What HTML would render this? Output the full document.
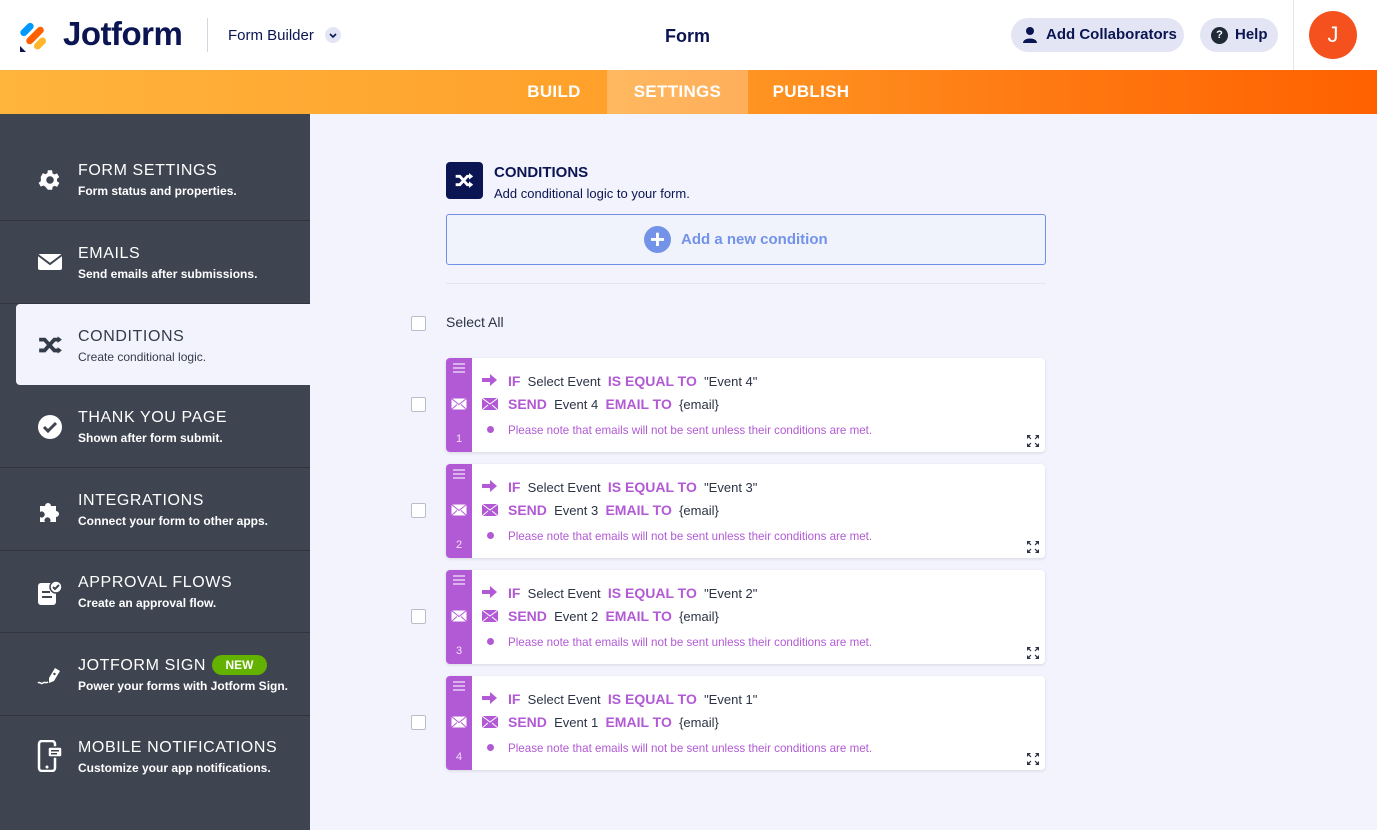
<!DOCTYPE html>
<html><head><meta charset="utf-8"><style>
*{box-sizing:border-box;margin:0;padding:0}
body{width:1377px;height:830px;overflow:hidden;background:#f3f3fe;font-family:"Liberation Sans",sans-serif;position:relative;color:#0a1551}
.abs{position:absolute}
.top{left:0;top:0;width:1377px;height:70px;background:#fff}
.band{left:0;top:70px;width:1377px;height:44px;background:linear-gradient(90deg,#ffb43c 0%,#ffa02a 45%,#ff7a12 75%,#ff6100 100%)}
.tab{top:70px;height:44px;line-height:44px;color:#fff;font-size:17px;font-weight:bold;text-align:center;letter-spacing:.3px}
.pill{top:18px;height:34px;border-radius:17px;background:#e3e5f5;font-weight:bold;font-size:15px;line-height:34px;color:#0a1551}
.side{left:0;top:114px;width:310px;height:716px;background:#3e4450}
.item{left:0;width:310px;height:83px;border-bottom:1px solid #2f343d;color:#fff}
.item .t{position:absolute;left:78px;top:24px;font-size:16px;letter-spacing:.6px}
.item .s{position:absolute;left:78px;top:46px;font-size:12px;font-weight:bold}
.item svg{position:absolute;left:37px;top:29px}
.act{left:16px;width:294px;background:#f3f3fe;color:#343c4a;border-radius:4px 0 0 4px;border:none}
.act .t{left:62px}.act .s{left:62px;font-weight:normal}
.act svg{left:21px}
.card{left:446px;width:599px;height:94px;background:#fff;border-radius:4px;box-shadow:0 1px 3px rgba(0,0,0,.12)}
.strip{position:absolute;left:0;top:0;width:26px;height:94px;background:#b25ad5;border-radius:4px 0 0 4px}
.ln{position:absolute;left:62px;font-size:13px;color:#2c3345;white-space:nowrap}
.k{color:#b25ad5;font-weight:bold;font-size:14px}
.note{position:absolute;left:62px;top:66px;font-size:11.6px;color:#b25ad5}
.cb{left:411px;width:15px;height:15px;border:1px solid #b8bdc9;border-radius:2px;background:#fff}
</style></head><body>
<div class="abs top"></div>
<svg class="abs" style="left:19px;top:19px" width="32" height="34" viewBox="0 0 32 34">
<rect x="0" y="7" width="16" height="7" rx="3.5" fill="#0099ff" transform="rotate(-45 8 10.5)"/>
<rect x="5" y="13" width="22" height="7" rx="3.5" fill="#ff6100" transform="rotate(-45 16 16.5)"/>
<rect x="14" y="21" width="14" height="7" rx="3.5" fill="#ffb629" transform="rotate(-45 21 24.5)"/>
<path d="M1 27 L7 33 L1 33Z" fill="#0a1551"/></svg>
<div class="abs" style="left:63px;top:15px;font-size:33px;font-weight:bold;color:#0a1551;letter-spacing:-.5px">Jotform</div>
<div class="abs" style="left:207px;top:18px;width:1px;height:34px;background:#d4d6e2"></div>
<div class="abs" style="left:228px;top:27px;font-size:15px;color:#0a1551">Form Builder</div>
<svg class="abs" style="left:325px;top:27px" width="16" height="16" viewBox="0 0 16 16"><circle cx="8" cy="8" r="8" fill="#e3e5f5"/><path d="M5 7l3 3 3-3" stroke="#0a1551" stroke-width="1.6" fill="none"/></svg>
<div class="abs" style="left:665px;top:26px;font-size:18px;font-weight:bold;color:#0a1551">Form</div>
<div class="abs pill" style="left:1011px;width:173px;padding-left:35px">Add Collaborators</div>
<svg class="abs" style="left:1022px;top:26px" width="16" height="18" viewBox="0 0 16 18"><circle cx="8" cy="5" r="4" fill="#0a1551"/><path d="M1 17 C1 11 15 11 15 17Z" fill="#0a1551"/></svg>
<div class="abs pill" style="left:1200px;width:78px;padding-left:35px">Help</div>
<div class="abs" style="left:1211px;top:27px;width:17px;height:17px;border-radius:9px;background:#1f2937;color:#fff;font-size:11px;font-weight:bold;text-align:center;line-height:17px">?</div>
<div class="abs" style="left:1293px;top:0;width:1px;height:70px;background:#e3e5ea"></div>
<div class="abs" style="left:1309px;top:11px;width:48px;height:48px;border-radius:24px;background:#f4511e;color:#fff;font-size:22px;text-align:center;line-height:48px">J</div>
<div class="abs band"></div>
<div class="abs tab" style="left:510px;width:88px">BUILD</div>
<div class="abs tab" style="left:607px;width:141px;background:rgba(255,255,255,.25)">SETTINGS</div>
<div class="abs tab" style="left:760px;width:102px">PUBLISH</div>
<div class="abs side"></div>
<div class="abs item" style="top:138px"><svg width="26" height="26" viewBox="0 0 24 24"><path fill="#fff" d="M19.4 13a7.5 7.5 0 000-2l2.1-1.6-2-3.5-2.5 1a7 7 0 00-1.7-1L15 3h-4l-.4 2.7a7 7 0 00-1.7 1l-2.5-1-2 3.5L4.6 11a7.5 7.5 0 000 2l-2.1 1.6 2 3.5 2.5-1a7 7 0 001.7 1L11 21h4l.4-2.7a7 7 0 001.7-1l2.5 1 2-3.5zM13 15.5a3.5 3.5 0 110-7 3.5 3.5 0 010 7z" transform="translate(-1 0)"/></svg><div class="t">FORM SETTINGS</div><div class="s">Form status and properties.</div></div>
<div class="abs item" style="top:221px"><svg width="26" height="22" viewBox="0 0 26 22" style="top:30px"><rect x="1" y="3" width="24" height="16" rx="2" fill="#fff"/><path d="M1 4 L13 13 L25 4" stroke="#3e4450" stroke-width="2" fill="none"/></svg><div class="t">EMAILS</div><div class="s">Send emails after submissions.</div></div>
<div class="abs item act" style="top:304px;height:81px"><svg width="26" height="22" viewBox="0 0 24 20" style="top:30px"><path d="M2 5h5l9 10h5M2 15h5l9-10h5" stroke="#343c4a" stroke-width="3.5" fill="none"/><path d="M19 2l4 3-4 3zM19 12l4 3-4 3z" fill="#343c4a"/></svg><div class="t">CONDITIONS</div><div class="s">Create conditional logic.</div></div>
<div class="abs item" style="top:385px"><svg width="26" height="26" viewBox="0 0 26 26"><circle cx="13" cy="13" r="12" fill="#fff"/><path d="M7 13l4 4 8-8" stroke="#3e4450" stroke-width="3" fill="none"/></svg><div class="t">THANK YOU PAGE</div><div class="s">Shown after form submit.</div></div>
<div class="abs item" style="top:468px"><svg width="26" height="26" viewBox="0 0 26 26"><path fill="#fff" d="M3 9h5a3 3 0 116 0h5v5a3 3 0 110 6v5h-6a3 3 0 10-5 0H3v-5a3 3 0 100-5z"/></svg><div class="t">INTEGRATIONS</div><div class="s">Connect your form to other apps.</div></div>
<div class="abs item" style="top:550px"><svg width="26" height="28" viewBox="0 0 26 28"><rect x="1" y="4" width="18" height="22" rx="3" fill="#fff"/><rect x="5" y="12" width="8" height="2" fill="#3e4450"/><rect x="5" y="17" width="10" height="2" fill="#3e4450"/><circle cx="19" cy="8" r="6" fill="#fff" stroke="#3e4450" stroke-width="1.5"/><path d="M16 8l2 2 4-4" stroke="#3e4450" stroke-width="2" fill="none"/></svg><div class="t">APPROVAL FLOWS</div><div class="s">Create an approval flow.</div></div>
<div class="abs item" style="top:633px"><svg width="26" height="26" viewBox="0 0 26 26"><path d="M12 16l6-10 5 3-6 10-5 2z" fill="#fff"/><circle cx="17.5" cy="12" r="1.2" fill="#3e4450"/><path d="M1 21c2-2 3 2 5 0s2 1 5-1" stroke="#fff" stroke-width="1.5" fill="none"/></svg><div class="t">JOTFORM SIGN</div><div class="s">Power your forms with Jotform Sign.</div><div style="position:absolute;left:212px;top:22px;width:55px;height:20px;border-radius:10px;background:#64b200;color:#fff;font-size:12px;font-weight:bold;text-align:center;line-height:20px">NEW</div></div>
<div class="abs item" style="top:715px;border:none"><svg width="26" height="32" viewBox="0 0 26 32" style="top:25px"><rect x="2" y="1" width="16" height="30" rx="3" fill="none" stroke="#fff" stroke-width="2.5"/><circle cx="10" cy="27" r="1.5" fill="#fff"/><rect x="11" y="7" width="14" height="10" rx="2" fill="#fff" stroke="#3e4450" stroke-width="1.5"/><rect x="14" y="10" width="8" height="1.5" fill="#3e4450"/><rect x="14" y="13" width="6" height="1.5" fill="#3e4450"/></svg><div class="t">MOBILE NOTIFICATIONS</div><div class="s">Customize your app notifications.</div></div>

<div class="abs" style="left:446px;top:162px;width:37px;height:37px;border-radius:4px;background:#0a1551"></div>
<svg class="abs" style="left:454px;top:172px" width="20" height="17" viewBox="0 0 24 20"><path d="M2 5h5l9 10h4M2 15h5l9-10h4" stroke="#fff" stroke-width="3.5" fill="none"/><path d="M18 1l5 4-5 4zM18 11l5 4-5 4z" fill="#fff"/></svg>
<div class="abs" style="left:494px;top:164px;font-size:15px;font-weight:bold;color:#0a1551">CONDITIONS</div>
<div class="abs" style="left:494px;top:186px;font-size:13px;color:#0a1551">Add conditional logic to your form.</div>
<div class="abs" style="left:446px;top:214px;width:600px;height:51px;border:1px solid #7090e8;border-radius:3px;background:#f0f2fc"></div>
<div class="abs" style="left:644px;top:226px;width:27px;height:27px;border-radius:14px;background:#7393e8;color:#fff;font-size:26px;font-weight:bold;text-align:center;line-height:27px">+</div>
<div class="abs" style="left:681px;top:231px;font-size:15px;font-weight:bold;color:#7393e8">Add a new condition</div>
<div class="abs" style="left:446px;top:283px;width:600px;height:1px;background:#e3e5ec"></div>
<div class="abs cb" style="top:316px"></div>
<div class="abs" style="left:446px;top:314px;font-size:14px;color:#2c3345">Select All</div>

<!-- cards -->
<div class="abs cb" style="top:397px"></div>
<div class="abs card" style="top:358px"><div class="strip"></div>
<svg style="position:absolute;left:7px;top:5px" width="12" height="10"><path d="M0 1h12M0 5h12M0 9h12" stroke="#e8d0f2" stroke-width="1.5"/></svg>
<svg style="position:absolute;left:5px;top:40px" width="16" height="12"><rect x=".5" y=".5" width="15" height="11" fill="#fff"/><path d="M.5 .5l7.5 6 7.5-6M.5 11.5l5.5-5M15.5 11.5l-5.5-5" stroke="#b25ad5" stroke-width="1" fill="none"/></svg>
<div style="position:absolute;left:10px;top:75px;color:#f3e0fb;font-size:11px">1</div>
<svg style="position:absolute;left:36px;top:16px" width="15" height="12"><path d="M0 4h8V0l7 6-7 6V8H0z" fill="#b25ad5"/></svg><div class="ln" style="top:15px"><span class="k">IF</span>&nbsp; Select Event &nbsp;<span class="k">IS EQUAL TO</span>&nbsp; "Event 4"</div>
<svg style="position:absolute;left:36px;top:40px" width="16" height="12"><rect width="16" height="12" fill="#b25ad5"/><path d="M0 0l8 6 8-6M0 12l6-5M16 12l-6-5" stroke="#fff" stroke-width="1" fill="none"/></svg><div class="ln" style="top:38px"><span class="k">SEND</span>&nbsp; Event 4 &nbsp;<span class="k">EMAIL TO</span>&nbsp; {email}</div>
<div style="position:absolute;left:41px;top:68px;width:7px;height:7px;border-radius:4px;background:#b25ad5"></div><div class="note">Please note that emails will not be sent unless their conditions are met.</div>
<svg style="position:absolute;left:581px;top:77px" width="12" height="12"><path d="M0 0h4L0 4zM12 0v4L8 0zM0 12V8l4 4zM12 12H8l4-4z" fill="#2c3345"/><path d="M1 1l3 3M11 1L8 4M1 11l3-3M11 11L8 8" stroke="#2c3345" stroke-width="1.2"/></svg></div>

<div class="abs cb" style="top:503px"></div>
<div class="abs card" style="top:464px"><div class="strip"></div>
<svg style="position:absolute;left:7px;top:5px" width="12" height="10"><path d="M0 1h12M0 5h12M0 9h12" stroke="#e8d0f2" stroke-width="1.5"/></svg>
<svg style="position:absolute;left:5px;top:40px" width="16" height="12"><rect x=".5" y=".5" width="15" height="11" fill="#fff"/><path d="M.5 .5l7.5 6 7.5-6M.5 11.5l5.5-5M15.5 11.5l-5.5-5" stroke="#b25ad5" stroke-width="1" fill="none"/></svg>
<div style="position:absolute;left:10px;top:75px;color:#f3e0fb;font-size:11px">2</div>
<svg style="position:absolute;left:36px;top:16px" width="15" height="12"><path d="M0 4h8V0l7 6-7 6V8H0z" fill="#b25ad5"/></svg><div class="ln" style="top:15px"><span class="k">IF</span>&nbsp; Select Event &nbsp;<span class="k">IS EQUAL TO</span>&nbsp; "Event 3"</div>
<svg style="position:absolute;left:36px;top:40px" width="16" height="12"><rect width="16" height="12" fill="#b25ad5"/><path d="M0 0l8 6 8-6M0 12l6-5M16 12l-6-5" stroke="#fff" stroke-width="1" fill="none"/></svg><div class="ln" style="top:38px"><span class="k">SEND</span>&nbsp; Event 3 &nbsp;<span class="k">EMAIL TO</span>&nbsp; {email}</div>
<div style="position:absolute;left:41px;top:68px;width:7px;height:7px;border-radius:4px;background:#b25ad5"></div><div class="note">Please note that emails will not be sent unless their conditions are met.</div>
<svg style="position:absolute;left:581px;top:77px" width="12" height="12"><path d="M0 0h4L0 4zM12 0v4L8 0zM0 12V8l4 4zM12 12H8l4-4z" fill="#2c3345"/><path d="M1 1l3 3M11 1L8 4M1 11l3-3M11 11L8 8" stroke="#2c3345" stroke-width="1.2"/></svg></div>

<div class="abs cb" style="top:609px"></div>
<div class="abs card" style="top:570px"><div class="strip"></div>
<svg style="position:absolute;left:7px;top:5px" width="12" height="10"><path d="M0 1h12M0 5h12M0 9h12" stroke="#e8d0f2" stroke-width="1.5"/></svg>
<svg style="position:absolute;left:5px;top:40px" width="16" height="12"><rect x=".5" y=".5" width="15" height="11" fill="#fff"/><path d="M.5 .5l7.5 6 7.5-6M.5 11.5l5.5-5M15.5 11.5l-5.5-5" stroke="#b25ad5" stroke-width="1" fill="none"/></svg>
<div style="position:absolute;left:10px;top:75px;color:#f3e0fb;font-size:11px">3</div>
<svg style="position:absolute;left:36px;top:16px" width="15" height="12"><path d="M0 4h8V0l7 6-7 6V8H0z" fill="#b25ad5"/></svg><div class="ln" style="top:15px"><span class="k">IF</span>&nbsp; Select Event &nbsp;<span class="k">IS EQUAL TO</span>&nbsp; "Event 2"</div>
<svg style="position:absolute;left:36px;top:40px" width="16" height="12"><rect width="16" height="12" fill="#b25ad5"/><path d="M0 0l8 6 8-6M0 12l6-5M16 12l-6-5" stroke="#fff" stroke-width="1" fill="none"/></svg><div class="ln" style="top:38px"><span class="k">SEND</span>&nbsp; Event 2 &nbsp;<span class="k">EMAIL TO</span>&nbsp; {email}</div>
<div style="position:absolute;left:41px;top:68px;width:7px;height:7px;border-radius:4px;background:#b25ad5"></div><div class="note">Please note that emails will not be sent unless their conditions are met.</div>
<svg style="position:absolute;left:581px;top:77px" width="12" height="12"><path d="M0 0h4L0 4zM12 0v4L8 0zM0 12V8l4 4zM12 12H8l4-4z" fill="#2c3345"/><path d="M1 1l3 3M11 1L8 4M1 11l3-3M11 11L8 8" stroke="#2c3345" stroke-width="1.2"/></svg></div>

<div class="abs cb" style="top:715px"></div>
<div class="abs card" style="top:676px"><div class="strip"></div>
<svg style="position:absolute;left:7px;top:5px" width="12" height="10"><path d="M0 1h12M0 5h12M0 9h12" stroke="#e8d0f2" stroke-width="1.5"/></svg>
<svg style="position:absolute;left:5px;top:40px" width="16" height="12"><rect x=".5" y=".5" width="15" height="11" fill="#fff"/><path d="M.5 .5l7.5 6 7.5-6M.5 11.5l5.5-5M15.5 11.5l-5.5-5" stroke="#b25ad5" stroke-width="1" fill="none"/></svg>
<div style="position:absolute;left:10px;top:75px;color:#f3e0fb;font-size:11px">4</div>
<svg style="position:absolute;left:36px;top:16px" width="15" height="12"><path d="M0 4h8V0l7 6-7 6V8H0z" fill="#b25ad5"/></svg><div class="ln" style="top:15px"><span class="k">IF</span>&nbsp; Select Event &nbsp;<span class="k">IS EQUAL TO</span>&nbsp; "Event 1"</div>
<svg style="position:absolute;left:36px;top:40px" width="16" height="12"><rect width="16" height="12" fill="#b25ad5"/><path d="M0 0l8 6 8-6M0 12l6-5M16 12l-6-5" stroke="#fff" stroke-width="1" fill="none"/></svg><div class="ln" style="top:38px"><span class="k">SEND</span>&nbsp; Event 1 &nbsp;<span class="k">EMAIL TO</span>&nbsp; {email}</div>
<div style="position:absolute;left:41px;top:68px;width:7px;height:7px;border-radius:4px;background:#b25ad5"></div><div class="note">Please note that emails will not be sent unless their conditions are met.</div>
<svg style="position:absolute;left:581px;top:77px" width="12" height="12"><path d="M0 0h4L0 4zM12 0v4L8 0zM0 12V8l4 4zM12 12H8l4-4z" fill="#2c3345"/><path d="M1 1l3 3M11 1L8 4M1 11l3-3M11 11L8 8" stroke="#2c3345" stroke-width="1.2"/></svg></div>
</body></html>
